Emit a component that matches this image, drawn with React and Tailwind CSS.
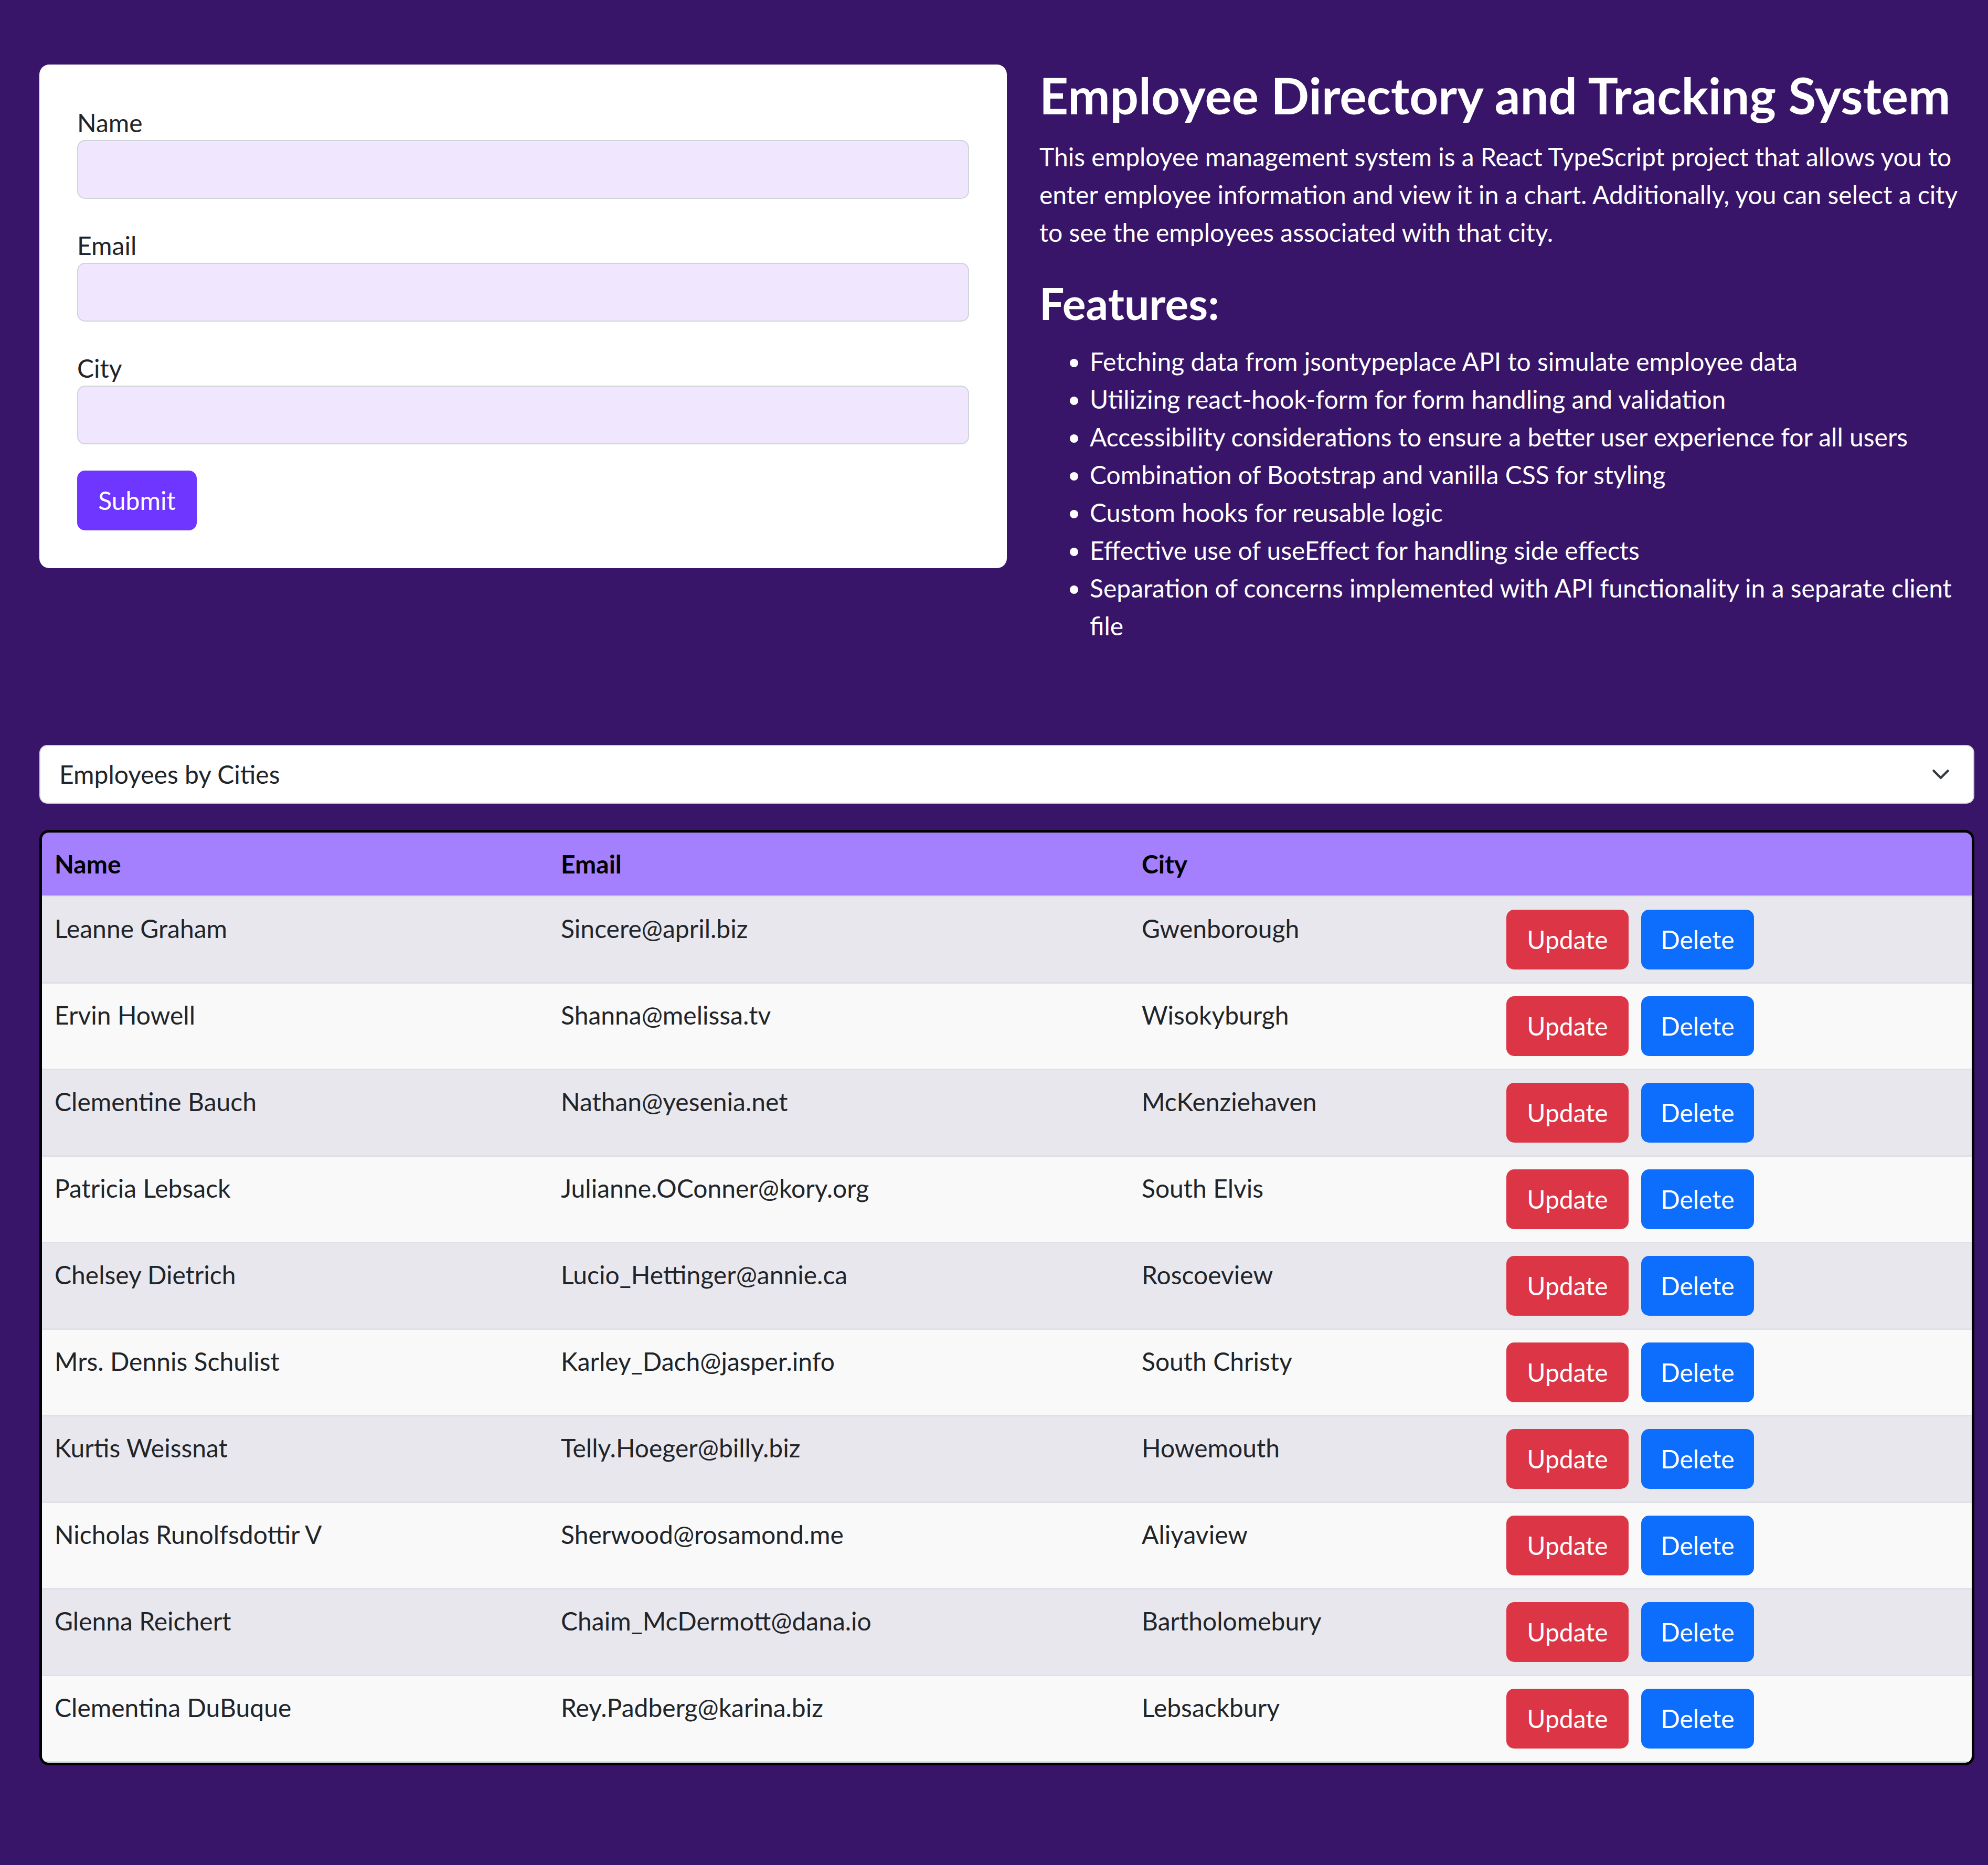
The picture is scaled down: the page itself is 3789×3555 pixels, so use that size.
import { useState } from "react";

const employees = [
  { name: "Leanne Graham", email: "Sincere@april.biz", city: "Gwenborough" },
  { name: "Ervin Howell", email: "Shanna@melissa.tv", city: "Wisokyburgh" },
  { name: "Clementine Bauch", email: "Nathan@yesenia.net", city: "McKenziehaven" },
  { name: "Patricia Lebsack", email: "Julianne.OConner@kory.org", city: "South Elvis" },
  { name: "Chelsey Dietrich", email: "Lucio_Hettinger@annie.ca", city: "Roscoeview" },
  { name: "Mrs. Dennis Schulist", email: "Karley_Dach@jasper.info", city: "South Christy" },
  { name: "Kurtis Weissnat", email: "Telly.Hoeger@billy.biz", city: "Howemouth" },
  { name: "Nicholas Runolfsdottir V", email: "Sherwood@rosamond.me", city: "Aliyaview" },
  { name: "Glenna Reichert", email: "Chaim_McDermott@dana.io", city: "Bartholomebury" },
  { name: "Clementina DuBuque", email: "Rey.Padberg@karina.biz", city: "Lebsackbury" },
];

const features = [
  "Fetching data from jsontypeplace API to simulate employee data",
  "Utilizing react-hook-form for form handling and validation",
  "Accessibility considerations to ensure a better user experience for all users",
  "Combination of Bootstrap and vanilla CSS for styling",
  "Custom hooks for reusable logic",
  "Effective use of useEffect for handling side effects",
  "Separation of concerns implemented with API functionality in a separate client file",
];

function Field({ label, id }) {
  return (
    <div className="mb-[50px]">
      <label htmlFor={id} className="block text-[48px] leading-[72px] pt-[3px] -mb-[3px] text-[#212529]">
        {label}
      </label>
      <input
        id={id}
        type="text"
        className="block w-full h-[112px] px-[36px] text-[48px] bg-[#f0e7fe] border-2 border-[#ced4da] rounded-[15px] outline-none"
      />
    </div>
  );
}

export default function App() {
  const [city, setCity] = useState("");

  return (
    <div className="min-h-screen bg-[#381568] pl-[75px] pr-[26px] pt-[123px] pb-[189px] font-['Lato','Open_Sans',sans-serif]">
      {/* top: form + description */}
      <div className="grid grid-cols-2">
        <div>
          <form className="bg-white rounded-[19px] p-[72px]" onSubmit={(e) => e.preventDefault()}>
            <Field label="Name" id="name" />
            <Field label="Email" id="email" />
            <Field label="City" id="city" />
            <button
              type="submit"
              className="h-[114px] w-[228px] rounded-[15px] bg-[#6f36ff] text-white text-[48px] leading-[72px]"
            >
              Submit
            </button>
          </form>
        </div>

        <div className="pl-[62px] text-white">
          <h2 className="text-[96px] leading-[116px] font-bold mb-[24px] pt-[4px] -mt-[4px]">
            Employee Directory and Tracking System
          </h2>
          <p className="text-[48px] leading-[72px] mb-[48px]">
            This employee management system is a React TypeScript project that allows you to enter employee
            information and view it in a chart. Additionally, you can select a city to see the employees
            associated with that city.
          </p>
          <h3 className="text-[84px] leading-[102px] font-bold mb-[24px]">Features:</h3>
          <ul className="list-disc pl-[96px] text-[48px] leading-[72px]">
            {features.map((f) => (
              <li key={f}>{f}</li>
            ))}
          </ul>
        </div>
      </div>

      {/* city filter */}
      <div className="relative mt-[191px]">
        <select
          value={city}
          onChange={(e) => setCity(e.target.value)}
          className="appearance-none block w-full h-[112px] pl-[36px] pr-[108px] bg-white border-2 border-[#ced4da] rounded-[15px] text-[48px] leading-[72px] text-[#212529] outline-none"
        >
          <option value="">Employees by Cities</option>
          {employees.map((e) => (
            <option key={e.city} value={e.city}>
              {e.city}
            </option>
          ))}
        </select>
        <svg
          className="absolute right-[46px] top-1/2 -translate-y-1/2 pointer-events-none"
          width="36"
          height="36"
          viewBox="0 0 16 16"
          fill="none"
          stroke="#343a40"
          strokeWidth="2"
          strokeLinecap="round"
          strokeLinejoin="round"
        >
          <path d="m2 5 6 6 6-6" />
        </svg>
      </div>

      {/* employees table */}
      <div className="mt-[50px] border-[5px] border-black rounded-[18px] overflow-hidden">
        <table className="w-full table-fixed border-collapse text-[48px] leading-[72px] text-[#212529]">
          <thead>
            <tr className="bg-[#a47ffe] text-black">
              <th className="w-[965px] text-left font-bold p-[24px] border-b-[3px] border-[#dee2e6]">Name</th>
              <th className="w-[1107px] text-left font-bold p-[24px] border-b-[3px] border-[#dee2e6]">Email</th>
              <th className="w-[695px] text-left font-bold p-[24px] border-b-[3px] border-[#dee2e6]">City</th>
              <th className="p-[24px] border-b-[3px] border-[#dee2e6]"></th>
            </tr>
          </thead>
          <tbody>
            {employees.map((e, i) => (
              <tr key={e.email} className={i % 2 === 0 ? "bg-[#e9e7ee]" : "bg-[#f9f9f9]"}>
                <td className="align-top p-[24px] border-b-[3px] border-[#dee2e6]">{e.name}</td>
                <td className="align-top p-[24px] border-b-[3px] border-[#dee2e6]">{e.email}</td>
                <td className="align-top p-[24px] border-b-[3px] border-[#dee2e6]">{e.city}</td>
                <td className="align-top p-[24px] border-b-[3px] border-[#dee2e6]">
                  <div className="flex gap-[24px]">
                    <button className="h-[114px] w-[233px] rounded-[15px] bg-[#dc3545] text-white">Update</button>
                    <button className="h-[114px] w-[215px] rounded-[15px] bg-[#0d6efd] text-white">Delete</button>
                  </div>
                </td>
              </tr>
            ))}
          </tbody>
        </table>
      </div>
    </div>
  );
}
